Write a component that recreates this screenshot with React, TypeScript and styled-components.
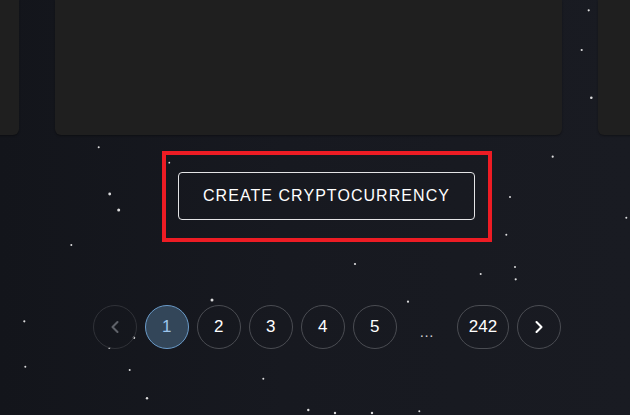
import React from "react";
import styled, { createGlobalStyle, css } from "styled-components";
import { ChevronLeft, ChevronRight } from "lucide-react";

const GlobalStyle = createGlobalStyle`
  html, body {
    margin: 0;
    padding: 0;
    background: #16181f;
    overflow: hidden;
  }
  * { box-sizing: border-box; }
`;

const Page = styled.div`
  position: relative;
  width: 630px;
  height: 415px;
  overflow: hidden;
  background: linear-gradient(90deg, #13151b 0%, #171920 45%, #191b22 100%);
  font-family: "Liberation Sans", Arial, sans-serif;
  display: flex;
  flex-direction: column;
`;

const Stars = styled.svg`
  position: absolute;
  inset: 0;
  width: 630px;
  height: 415px;
  pointer-events: none;
`;

const CardsRow = styled.div`
  position: relative;
  display: flex;
  justify-content: center;
  gap: 36px;
  height: 135px;
  padding-right: 13px;
  flex-shrink: 0;
`;

const Card = styled.div`
  flex: 0 0 507px;
  height: 135px;
  background: #1f1f1f;
  border-radius: 0 0 6px 6px;
  box-shadow: 0 1px 2px rgba(0, 0, 0, 0.35);
`;

const Main = styled.div`
  position: relative;
  display: flex;
  flex-direction: column;
  align-items: center;
  padding-left: 24px;
`;

const Highlight = styled.div`
  margin-top: 16px;
  border: 4px solid #ed1c24;
  padding: 17px 13px 18px 12px;
`;

const CreateButton = styled.button`
  display: flex;
  align-items: center;
  justify-content: center;
  width: 297px;
  height: 48px;
  background: transparent;
  border: 1px solid #e4e4e6;
  border-radius: 4px;
  color: #ffffff;
  font-family: "Liberation Sans", Arial, sans-serif;
  font-size: 16px;
  letter-spacing: 1.05px;
  text-transform: uppercase;
  cursor: pointer;
`;

const Pagination = styled.nav`
  margin-top: 63px;
  display: flex;
  align-items: center;
  gap: 8px;
`;

const PageButton = styled.button<{ $active?: boolean }>`
  min-width: 44px;
  height: 44px;
  padding: 0 11px;
  border-radius: 22px;
  border: 1px solid #4a4c52;
  background: transparent;
  color: #ffffff;
  font-family: "Liberation Sans", Arial, sans-serif;
  font-size: 17px;
  display: flex;
  align-items: center;
  justify-content: center;
  cursor: pointer;

  ${(p) =>
    p.$active &&
    css`
      background: #334659;
      border-color: #6a9bc9;
      color: #9cc5ec;
    `}

  &:disabled {
    border-color: #303238;
    color: #5f6269;
    cursor: default;
  }
`;

const Ellipsis = styled.span`
  width: 44px;
  height: 44px;
  display: flex;
  align-items: center;
  justify-content: center;
  padding-top: 8px;
  color: #d0d0d4;
  font-size: 15px;
  letter-spacing: 0.5px;
`;

const stars: [number, number, number][] = [
  [588.7, 10.3, 1.1],
  [581.7, 50, 1.1],
  [591.3, 97.7, 1.3],
  [98.7, 147.3, 1],
  [169.3, 162.7, 0.9],
  [109.7, 194, 1.4],
  [118.7, 210, 1.5],
  [71.3, 245, 1],
  [552.7, 156.7, 1.1],
  [510, 197, 1],
  [626.3, 217.7, 1],
  [506.3, 234.7, 1],
  [355, 264, 1.1],
  [515, 267, 1],
  [480.7, 274, 1],
  [24.3, 321.3, 1.1],
  [212, 300, 1.5],
  [134, 337.7, 1.2],
  [109.3, 348, 1],
  [25.3, 366.7, 1],
  [129.7, 370, 1],
  [263.3, 378.7, 1],
  [147, 398.3, 1.2],
  [308.3, 410, 1.2],
  [515.7, 279.3, 1.1],
  [408, 301.7, 1.1],
  [419.3, 411.3, 1],
  [335, 413, 1.2],
  [372, 413, 1.2],
];

export default function App() {
  return (
    <>
      <GlobalStyle />
      <Page>
        <Stars viewBox="0 0 630 415">
          {stars.map(([x, y, r], i) => (
            <circle key={i} cx={x} cy={y} r={r} fill="#ffffff" opacity={0.85} />
          ))}
        </Stars>
        <CardsRow>
          <Card />
          <Card />
          <Card />
        </CardsRow>
        <Main>
          <Highlight>
            <CreateButton>Create Cryptocurrency</CreateButton>
          </Highlight>
          <Pagination>
            <PageButton disabled aria-label="Previous page">
              <ChevronLeft size={20} strokeWidth={2.5} />
            </PageButton>
            <PageButton $active>1</PageButton>
            <PageButton>2</PageButton>
            <PageButton>3</PageButton>
            <PageButton>4</PageButton>
            <PageButton>5</PageButton>
            <Ellipsis>...</Ellipsis>
            <PageButton>242</PageButton>
            <PageButton aria-label="Next page">
              <ChevronRight size={20} strokeWidth={2.5} />
            </PageButton>
          </Pagination>
        </Main>
      </Page>
    </>
  );
}
